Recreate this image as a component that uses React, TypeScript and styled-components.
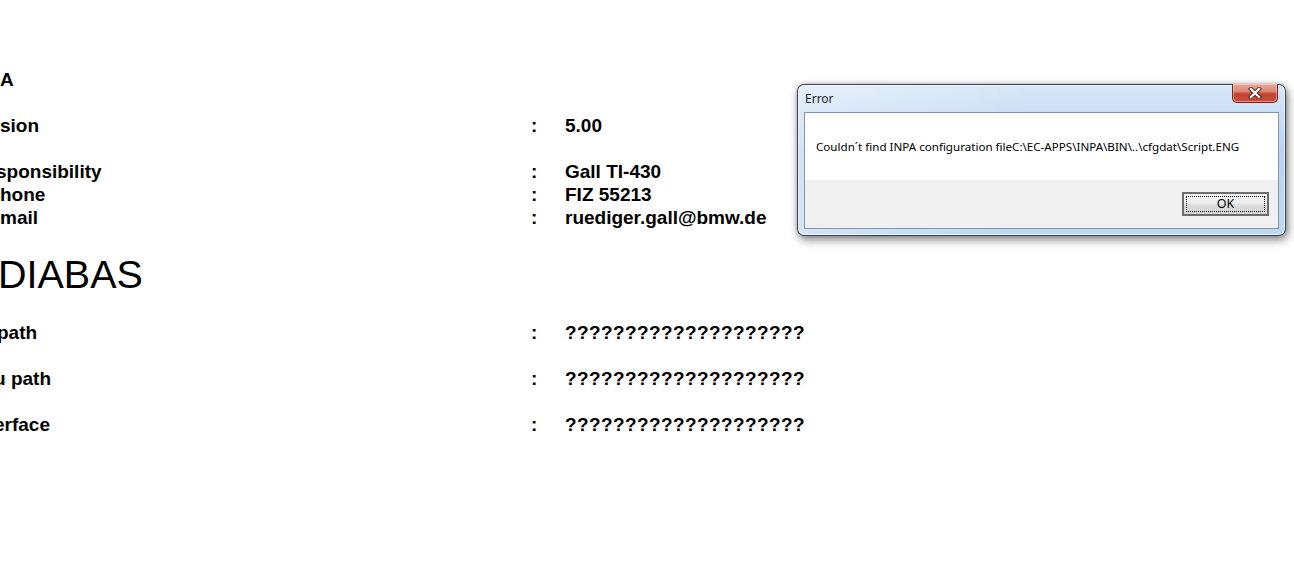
import React from "react";
import styled, { createGlobalStyle } from "styled-components";

const GlobalStyle = createGlobalStyle`
  html, body { margin: 0; padding: 0; background: #ffffff; }
  body { font-family: "Liberation Sans", Arial, sans-serif; color: #000; }
`;

const Page = styled.div`
  position: relative;
  width: 1294px;
  height: 567px;
  overflow: hidden;
  padding-top: 68px;
  box-sizing: border-box;
`;

const InfoGrid = styled.div`
  display: grid;
  grid-template-columns: 531px 34px auto;
  font-weight: bold;
  font-size: 19px;
  line-height: 23px;
  white-space: nowrap;
`;

const Label = styled.div<{ $cut?: number }>`
  grid-column: 1;
  overflow: hidden;
  & > span {
    display: inline-block;
    margin-left: ${(p) => -(p.$cut ?? 0)}px;
  }
`;

const Colon = styled.div`
  grid-column: 2;
`;

const Value = styled.div`
  grid-column: 3;
`;

const Unknown = styled(Value)`
  letter-spacing: 0.4px;
`;

const Blank = styled.div`
  grid-column: 1 / -1;
  height: 23px;
`;

const Heading = styled.h1`
  grid-column: 1 / -1;
  margin: 22px 0 24px -2px;
  font-size: 39.5px;
  line-height: 46px;
  font-weight: normal;
`;

const Window = styled.div`
  position: absolute;
  left: 797px;
  top: 84px;
  width: 489px;
  height: 152px;
  box-sizing: border-box;
  border: 1px solid rgba(30, 40, 55, 0.85);
  border-radius: 7px;
  background:
    linear-gradient(
      100deg,
      rgba(255, 255, 255, 0.35) 0%,
      rgba(255, 255, 255, 0.15) 30%,
      rgba(255, 255, 255, 0) 45%,
      rgba(255, 255, 255, 0) 100%
    ),
    linear-gradient(180deg, #d7e7f8 0%, #c9def5 20%, #b9d4f0 45%, #c0d8f2 100%);
  box-shadow: 2px 4px 10px rgba(0, 0, 0, 0.45), 0 0 4px rgba(0, 0, 0, 0.25),
    inset 0 0 0 1px rgba(255, 255, 255, 0.6);
  padding: 27px 6px 6px 6px;
  display: flex;
  flex-direction: column;
  font-family: "Noto Sans", "Liberation Sans", sans-serif;
`;

const TitleText = styled.div`
  position: absolute;
  left: 7px;
  top: 5px;
  font-size: 12px;
  color: #1e1e1e;
`;

const CloseButton = styled.div`
  position: absolute;
  right: 7px;
  top: -1px;
  width: 46px;
  height: 19px;
  box-sizing: border-box;
  border: 1px solid #6e2a22;
  border-top: none;
  border-radius: 0 0 5px 5px;
  background: linear-gradient(
    180deg,
    #e9a99a 0%,
    #dc8a78 40%,
    #c6402f 55%,
    #c9503d 100%
  );
  box-shadow: inset 0 0 0 1px rgba(255, 210, 200, 0.5);
  display: flex;
  align-items: center;
  justify-content: center;
`;

const Client = styled.div`
  flex: 1;
  display: flex;
  flex-direction: column;
  border: 1px solid #8196ad;
`;

const MessageArea = styled.div`
  height: 67px;
  background: #ffffff;
  display: flex;
  align-items: center;
  padding-left: 11px;
  font-size: 11.6px;
  color: #000;
  white-space: nowrap;
`;

const ButtonArea = styled.div`
  flex: 1;
  background: #f0f0f0;
  display: flex;
  justify-content: flex-end;
  align-items: flex-start;
  padding: 12px 9px 0 0;
`;

const OkButton = styled.button`
  width: 87px;
  height: 24px;
  box-sizing: border-box;
  border: 2px solid #6d6d6d;
  background: linear-gradient(180deg, #f4f4f4 0%, #ececec 50%, #dedede 51%, #d3d3d3 100%);
  padding: 2px;
  font-family: "Noto Sans", "Liberation Sans", sans-serif;
  font-size: 12.5px;
  color: #000;
  display: flex;
`;

const FocusRect = styled.span`
  flex: 1;
  border: 1px dotted #000;
  display: flex;
  align-items: center;
  justify-content: center;
  line-height: 14px;
`;

const CloseGlyph = () => (
  <svg width="14" height="12" viewBox="0 0 14 12">
    <path d="M3 2 L11 10 M11 2 L3 10" stroke="#4a1a14" strokeWidth="4.2" strokeLinecap="square" />
    <path d="M3 2 L11 10 M11 2 L3 10" stroke="#ffffff" strokeWidth="2.4" strokeLinecap="square" />
  </svg>
);

const UNKNOWN = "????????????????????";

export default function App() {
  return (
    <>
      <GlobalStyle />
      <Page>
        <InfoGrid>
          <Label><span>A</span></Label>
          <Colon />
          <Value />
          <Blank />
          <Label><span>sion</span></Label>
          <Colon>:</Colon>
          <Value>5.00</Value>
          <Blank />
          <Label $cut={4}><span>sponsibility</span></Label>
          <Colon>:</Colon>
          <Value>Gall TI-430</Value>
          <Label><span>hone</span></Label>
          <Colon>:</Colon>
          <Value>FIZ 55213</Value>
          <Label><span>mail</span></Label>
          <Colon>:</Colon>
          <Value>ruediger.gall@bmw.de</Value>
          <Heading>DIABAS</Heading>
          <Label $cut={3}><span>path</span></Label>
          <Colon>:</Colon>
          <Unknown>{UNKNOWN}</Unknown>
          <Blank />
          <Label $cut={6}><span>u path</span></Label>
          <Colon>:</Colon>
          <Unknown>{UNKNOWN}</Unknown>
          <Blank />
          <Label $cut={6}><span>erface</span></Label>
          <Colon>:</Colon>
          <Unknown>{UNKNOWN}</Unknown>
        </InfoGrid>

        <Window>
          <TitleText>Error</TitleText>
          <CloseButton>
            <CloseGlyph />
          </CloseButton>
          <Client>
            <MessageArea>
              Couldn´t find INPA configuration fileC:\EC-APPS\INPA\BIN\..\cfgdat\Script.ENG
            </MessageArea>
            <ButtonArea>
              <OkButton>
                <FocusRect>OK</FocusRect>
              </OkButton>
            </ButtonArea>
          </Client>
        </Window>
      </Page>
    </>
  );
}
